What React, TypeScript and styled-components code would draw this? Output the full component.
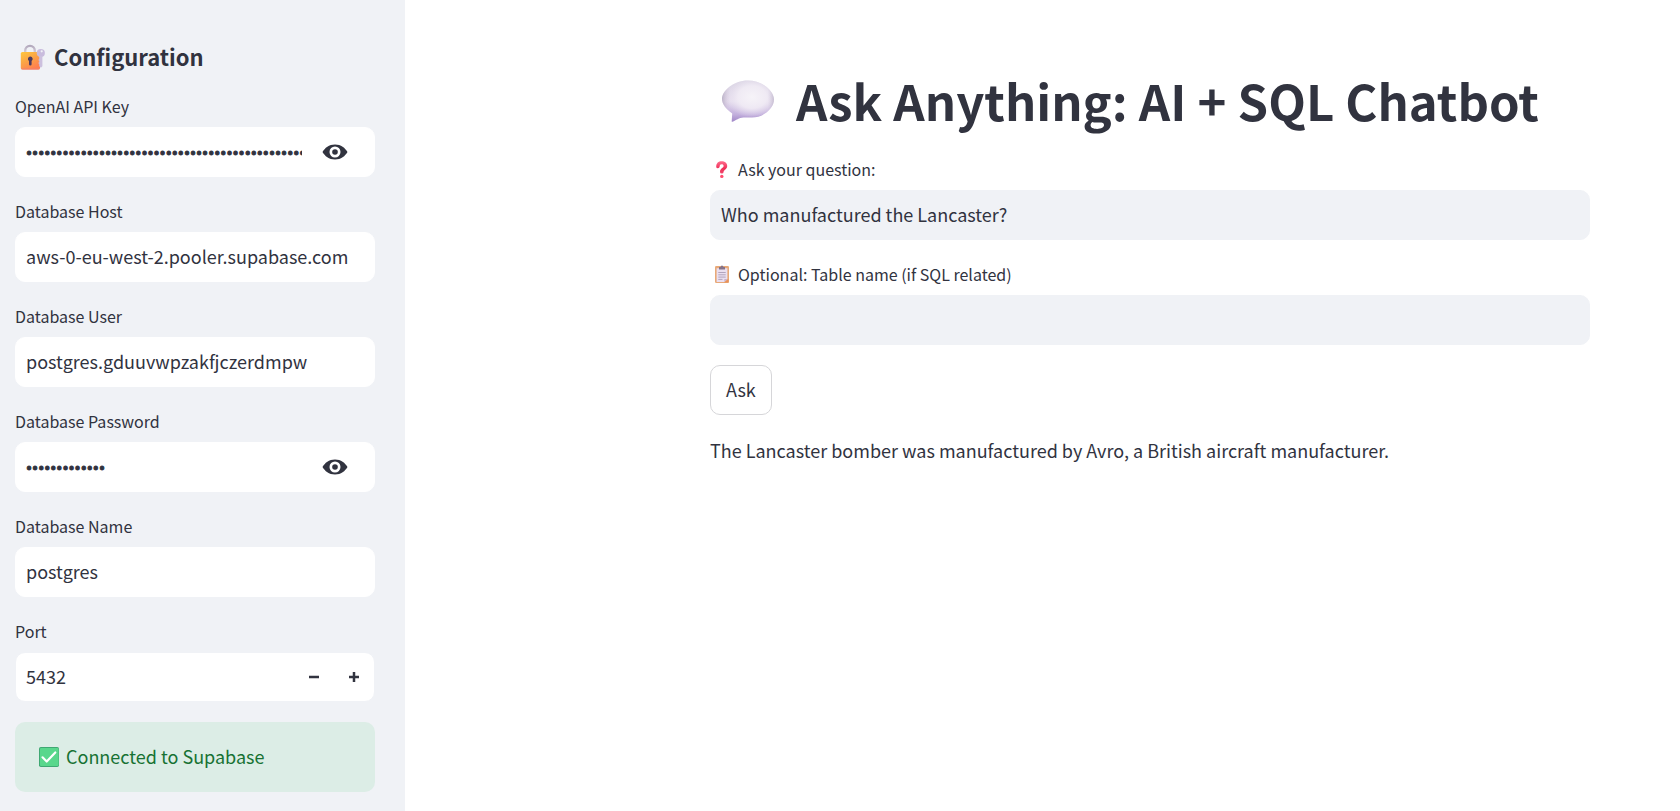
import React, { useId, useState } from "react";
import styled, { createGlobalStyle } from "styled-components";

const ink = "#31333f";
const panel = "#f0f2f6";

const GlobalStyle = createGlobalStyle`
  *, *::before, *::after { box-sizing: border-box; }
  body {
    margin: 0;
    background: #ffffff;
    color: ${ink};
    font-family: "Noto Sans CJK SC", "Noto Sans", sans-serif;
    font-size: 18px;
    line-height: 30px;
  }
  input, button { font: inherit; color: inherit; }
`;

const Page = styled.div`
  display: flex;
  min-height: 100vh;
`;

const Sidebar = styled.aside`
  display: flex;
  flex-direction: column;
  gap: 20px;
  flex: 0 0 405px;
  padding: 42px 30px 18px 15px;
  background: ${panel};
`;

const Main = styled.main`
  flex: 1;
  display: flex;
  justify-content: flex-end;
  min-width: 0;
  padding: 70px 90px 40px;
`;

const Content = styled.form`
  display: flex;
  flex-direction: column;
  align-items: stretch;
  gap: 20px;
  width: 100%;
  max-width: 880px;
`;

const SidebarTitle = styled.h2`
  display: flex;
  align-items: center;
  gap: 7px;
  margin: 0;
  padding-bottom: 2px;
  font-size: 22px;
  line-height: 28px;
  font-weight: 600;
`;

const Title = styled.h1`
  display: flex;
  align-items: center;
  gap: 18px;
  margin: 0;
  padding-bottom: 6px;
  font-size: 49px;
  line-height: 59px;
  font-weight: 700;
`;

const FieldGroup = styled.div`
  display: flex;
  flex-direction: column;
  gap: 7px;
`;

const FieldLabel = styled.label`
  display: flex;
  align-items: center;
  gap: 4px;
  font-size: 16px;
  line-height: 28px;
`;

const InputBox = styled.div<{ $fill: string; $edge?: string }>`
  display: flex;
  align-items: stretch;
  height: 50px;
  overflow: hidden;
  border: 1px solid ${(p) => p.$edge ?? p.$fill};
  border-radius: 10px;
  background: ${(p) => p.$fill};
`;

const TextInput = styled.input`
  flex: 1;
  min-width: 0;
  padding: 0 10px 2px;
  border: 0;
  outline: 0;
  background: transparent;
  appearance: textfield;

  &::-webkit-inner-spin-button,
  &::-webkit-outer-spin-button {
    appearance: none;
    margin: 0;
  }
`;

const SecretInput = styled(TextInput)`
  padding-right: 0;

  &[type="password"] {
    font-family: Roboto, sans-serif;
    -webkit-text-stroke: 1px ${ink};
    padding-top: 3px;
    padding-bottom: 0;
  }
`;

const IconButton = styled.button<{ $width: number; $end?: number }>`
  display: flex;
  align-items: center;
  justify-content: center;
  flex: 0 0 ${(p) => p.$width}px;
  margin: 0 ${(p) => p.$end ?? 0}px 0 0;
  padding: 0;
  border: 0;
  background: transparent;
  cursor: pointer;
`;

const AskButton = styled.button`
  align-self: flex-start;
  height: 50px;
  padding: 0 15px 2px;
  border: 1px solid #d6d6d9;
  border-radius: 10px;
  background: #ffffff;
  cursor: pointer;
`;

const Answer = styled.p`
  margin: 0;
`;

const Alert = styled.div`
  display: flex;
  align-items: center;
  gap: 5px;
  min-height: 70px;
  padding: 0 20px 2px;
  border-radius: 10px;
  background: #dcede6;
  color: #177233;
`;

const LockIcon = () => (
  <svg width="32" height="28" viewBox="0 0 32 28" aria-hidden="true">
    <defs>
      <linearGradient id="lockBody" x1="0" y1="0" x2="0.6" y2="1">
        <stop offset="0" stopColor="#ffc83d" />
        <stop offset="0.5" stopColor="#fba545" />
        <stop offset="1" stopColor="#ff7f50" />
      </linearGradient>
      <linearGradient id="lockShackle" x1="0" y1="0" x2="0" y2="1">
        <stop offset="0" stopColor="#b3a9bd" />
        <stop offset="1" stopColor="#dcd6e0" />
      </linearGradient>
    </defs>
    <path d="M10.200 12V8.700a4.800 4.800 0 0 1 9.600 0V12" fill="none" stroke="url(#lockShackle)" strokeWidth="2.400" />
    <rect x="5.800" y="10" width="19.200" height="17.600" rx="1.600" fill="url(#lockBody)" />
    <path d="M6.100 26.500q.6 1 1.700 1h15.200q1.300 0 1.700-1z" fill="#f08070" />
    <path d="M15.300 14.600a2.400 2.400 0 0 1 1.300 4.400v3.300a1.300 1.300 0 0 1-2.600 0V19a2.400 2.400 0 0 1 1.300-4.400z" fill="#4d3a5e" />
    <circle cx="25.800" cy="11" r="4.100" fill="#c9bcdd" />
    <path d="M24.200 14h3.200v10.200l-1.500 1.600-1.700-1.500v-2.100l-.9-1.100.9-1v-1l-.9-1.100.9-1z" fill="#ccc0de" />
    <circle cx="26.700" cy="9.300" r="1.100" fill="#f0f2f6" />
  </svg>
);

const BubbleIcon = () => (
  <svg width="68" height="52" viewBox="0 -3 68 52" aria-hidden="true">
    <defs>
      <linearGradient id="bubbleBase" x1="0" y1="0" x2="0" y2="1">
        <stop offset="0" stopColor="#d9d4e3" />
        <stop offset="0.5" stopColor="#e6deee" />
        <stop offset="0.82" stopColor="#c3b0dd" />
        <stop offset="1" stopColor="#a188c8" />
      </linearGradient>
      <radialGradient id="bubbleGlow" cx="0.58" cy="0.4" r="0.5">
        <stop offset="0" stopColor="#f6f3f8" />
        <stop offset="0.55" stopColor="#f1ecf5" stopOpacity="0.9" />
        <stop offset="1" stopColor="#e9e1f0" stopOpacity="0" />
      </radialGradient>
      <linearGradient id="bubbleEdge" x1="0" y1="0" x2="1" y2="0">
        <stop offset="0" stopColor="#aaa0b8" stopOpacity="0.7" />
        <stop offset="0.16" stopColor="#d8c8df" stopOpacity="0" />
        <stop offset="0.88" stopColor="#c8bdd2" stopOpacity="0" />
        <stop offset="1" stopColor="#a79db5" stopOpacity="0.5" />
      </linearGradient>
    </defs>
    {["url(#bubbleBase)", "url(#bubbleGlow)", "url(#bubbleEdge)"].map((fill) => (
      <path
        key={fill}
        fill={fill}
        d="M38 3.500C53 3.500 64 14.500 64 22.500C64 31 54 40.500 42 40.500H33.500C29 40.500 26 43.500 22.500 44.700Q21.600 45 21.700 44L22.200 36.500C16 32 12 27 12 22C12 14 23 3.500 38 3.500Z"
      />
    ))}
  </svg>
);

const QuestionIcon = () => (
  <svg width="24" height="20" viewBox="0 -1 24 20" aria-hidden="true">
    <defs>
      <linearGradient id="questionInk" x1="0" y1="0" x2="0" y2="1">
        <stop offset="0" stopColor="#ff6d8d" />
        <stop offset="0.6" stopColor="#ee2f58" />
        <stop offset="1" stopColor="#f0476b" />
      </linearGradient>
    </defs>
    <path
      d="M6.200 6.700C6.200 3 8.500 1.200 11.600 1.200C14.900 1.200 17.200 3.200 17.200 6C17.200 9.500 13.600 9.800 13.600 12Q13.500 13.500 11.800 13.500Q10 13.500 10 11.900C10 8.300 13.600 8.300 13.600 6.100C13.600 4.900 12.800 4.300 11.600 4.300C10.200 4.300 9.800 5.200 9.700 6.500Q9.500 8.200 7.900 8.200Q6.200 8.200 6.200 6.700Z"
      fill="url(#questionInk)"
    />
    <circle cx="11.800" cy="16.400" r="1.700" fill="#ff4d6f" />
  </svg>
);

const ClipboardIcon = () => (
  <svg width="24" height="20" viewBox="0 -1 24 20" aria-hidden="true">
    <rect x="5" y="1" width="14" height="17" rx="1.300" fill="#e8a978" />
    <path d="M6.600 3.200h10.800v10.800l-3.100 3H6.600z" fill="#eadff0" />
    <path d="M14.300 17v-3h3.100z" fill="#c7b1cf" />
    <path d="M18.500 14v3.500h-4.200z" fill="#e8915b" />
    <path d="M9 2h1.600q.1-1.500 1.400-1.500T13.400 2H15v2.500H9z" fill="#857389" />
    <path d="M8.300 7.500h7.400M8.300 9.800h7.400M8.300 12.100h7.400M8.300 14.400h4.200" stroke="#ab9db8" strokeWidth="0.900" />
  </svg>
);

const CheckIcon = () => (
  <svg width="26" height="22" viewBox="0 0 26 22" aria-hidden="true">
    <rect x="4" y="2" width="20" height="20" rx="1.800" fill="#3fa873" />
    <rect x="5" y="3" width="18.600" height="18" rx="1" fill="#59d78c" />
    <path d="M7.500 12.300l4.200 4.200L20.300 7.500" fill="none" stroke="#ffffff" strokeWidth="2.200" strokeLinecap="round" strokeLinejoin="round" />
  </svg>
);

const EyeIcon = () => (
  <svg width="26" height="16" viewBox="0 0 26 16" aria-hidden="true">
    <path
      fill={ink}
      fillRule="evenodd"
      d="M13 .5C19 .5 23.200 4 25.500 8C23.200 12 19 15.500 13 15.500S2.800 12 .5 8C2.800 4 7 .5 13 .5ZM13 2.500a5.500 5.500 0 1 0 0 11a5.500 5.500 0 0 0 0-11Z"
    />
    <circle cx="13" cy="8" r="2.800" fill={ink} />
  </svg>
);

const MinusIcon = () => (
  <svg width="10" height="10" viewBox="0 0 10 10" aria-hidden="true">
    <path d="M0 5h10" stroke={ink} strokeWidth="2.500" />
  </svg>
);

const PlusIcon = () => (
  <svg width="10" height="10" viewBox="0 0 10 10" aria-hidden="true">
    <path d="M0 5h10M5 0v10" stroke={ink} strokeWidth="2.500" />
  </svg>
);

type FieldProps = {
  label: string;
  initial: string;
  icon?: React.ReactNode;
  fill?: string;
};

function TextField({ label, initial, icon, fill = "#ffffff" }: FieldProps) {
  const id = useId();
  const [value, setValue] = useState(initial);
  return (
    <FieldGroup>
      <FieldLabel htmlFor={id}>
        {icon}
        {label}
      </FieldLabel>
      <InputBox $fill={fill}>
        <TextInput id={id} type="text" value={value} onChange={(e) => setValue(e.target.value)} />
      </InputBox>
    </FieldGroup>
  );
}

function SecretField({ label, initial }: FieldProps) {
  const id = useId();
  const [value, setValue] = useState(initial);
  const [shown, setShown] = useState(false);
  return (
    <FieldGroup>
      <FieldLabel htmlFor={id}>{label}</FieldLabel>
      <InputBox $fill="#ffffff">
        <SecretInput
          id={id}
          type={shown ? "text" : "password"}
          value={value}
          onChange={(e) => setValue(e.target.value)}
        />
        <IconButton
          type="button"
          $width={66}
          $end={6}
          aria-label={shown ? "Hide password text" : "Show password text"}
          onClick={() => setShown(!shown)}
        >
          <EyeIcon />
        </IconButton>
      </InputBox>
    </FieldGroup>
  );
}

function NumberField({ label, initial }: { label: string; initial: number }) {
  const id = useId();
  const [value, setValue] = useState(initial);
  return (
    <FieldGroup>
      <FieldLabel htmlFor={id}>{label}</FieldLabel>
      <InputBox $fill="#ffffff" $edge={panel}>
        <TextInput id={id} type="number" value={value} onChange={(e) => setValue(Number(e.target.value))} />
        <IconButton type="button" $width={40} aria-label="Decrease port" onClick={() => setValue(value - 1)}>
          <MinusIcon />
        </IconButton>
        <IconButton type="button" $width={40} aria-label="Increase port" onClick={() => setValue(value + 1)}>
          <PlusIcon />
        </IconButton>
      </InputBox>
    </FieldGroup>
  );
}

export default function App() {
  return (
    <>
      <GlobalStyle />
      <Page>
        <Sidebar>
          <SidebarTitle>
            <LockIcon />
            Configuration
          </SidebarTitle>
          <SecretField label="OpenAI API Key" initial={"x".repeat(56)} />
          <TextField label="Database Host" initial="aws-0-eu-west-2.pooler.supabase.com" />
          <TextField label="Database User" initial="postgres.gduuvwpzakfjczerdmpw" />
          <SecretField label="Database Password" initial={"x".repeat(13)} />
          <TextField label="Database Name" initial="postgres" />
          <NumberField label="Port" initial={5432} />
          <Alert role="status">
            <CheckIcon />
            Connected to Supabase
          </Alert>
        </Sidebar>
        <Main>
          <Content onSubmit={(e) => e.preventDefault()}>
            <Title>
              <BubbleIcon />
              Ask Anything: AI + SQL Chatbot
            </Title>
            <TextField
              label="Ask your question:"
              initial="Who manufactured the Lancaster?"
              icon={<QuestionIcon />}
              fill={panel}
            />
            <TextField
              label="Optional: Table name (if SQL related)"
              initial=""
              icon={<ClipboardIcon />}
              fill={panel}
            />
            <AskButton type="submit">Ask</AskButton>
            <Answer>The Lancaster bomber was manufactured by Avro, a British aircraft manufacturer.</Answer>
          </Content>
        </Main>
      </Page>
    </>
  );
}
